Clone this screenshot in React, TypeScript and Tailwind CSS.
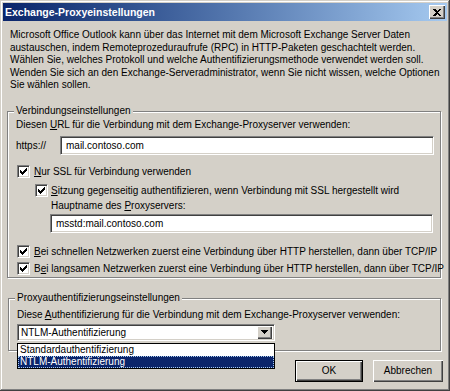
import React from "react";

const CHECK_PIXELS = [
  [6, 0],
  [5, 1], [6, 1],
  [0, 2], [4, 2], [5, 2], [6, 2],
  [0, 3], [1, 3], [3, 3], [4, 3], [5, 3],
  [0, 4], [1, 4], [2, 4], [3, 4], [4, 4],
  [1, 5], [2, 5], [3, 5],
  [2, 6],
];

function Check() {
  return (
    <span className="flex h-[13px] w-[13px] shrink-0 items-center justify-center border border-t-[#808080] border-l-[#808080] border-b-white border-r-white bg-white shadow-[inset_1px_1px_#404040,inset_-1px_-1px_#d4d0c8]">
      <svg width="7" height="7" viewBox="0 0 7 7" shapeRendering="crispEdges">
        {CHECK_PIXELS.map(([x, y]) => (
          <rect key={`${x}-${y}`} x={x} y={y} width="1" height="1" fill="#000" />
        ))}
      </svg>
    </span>
  );
}

function Sunken({ className, children }: { className?: string; children?: React.ReactNode }) {
  return (
    <div
      className={
        "flex items-center border border-t-[#808080] border-l-[#808080] border-b-white border-r-white bg-white shadow-[inset_1px_1px_#404040,inset_-1px_-1px_#d4d0c8] " +
        (className ?? "")
      }
    >
      {children}
    </div>
  );
}

function Group({ label, className, children }: { label: string; className?: string; children?: React.ReactNode }) {
  return (
    <div
      className={
        "relative border border-[#808080] shadow-[1px_1px_0_#fff,inset_1px_1px_0_#fff] " + (className ?? "")
      }
    >
      <span className="absolute left-[6px] top-[-8px] bg-[#d4d0c8] px-[2px] leading-[13px]">{label}</span>
      {children}
    </div>
  );
}

function Button({ children, def }: { children: React.ReactNode; def?: boolean }) {
  return (
    <div
      className={
        "flex h-[22px] items-center justify-center bg-[#d4d0c8] " +
        (def
          ? "w-[68px] border border-black shadow-[inset_1px_1px_#fff,inset_-1px_-1px_#404040,inset_-2px_-2px_#808080]"
          : "w-[70px] shadow-[inset_1px_1px_#fff,inset_-1px_-1px_#404040,inset_-2px_-2px_#808080]")
      }
    >
      {children}
    </div>
  );
}

export default function App() {
  return (
    <div className="h-[391px] w-[450px] overflow-hidden whitespace-nowrap bg-[#d4d0c8] font-['Liberation_Sans',Arial,sans-serif] text-[10px] leading-[13px] text-black">
      <div className="relative h-[391px] w-[450px] p-[3px] shadow-[inset_-1px_-1px_#404040,inset_1px_1px_#d4d0c8,inset_-2px_-2px_#808080,inset_2px_2px_#fff]">
        {/* Title bar */}
        <div className="flex h-[18px] items-center justify-between bg-gradient-to-r from-[#0a246a] to-[#a6caf0] pl-[2px] pr-[2px]">
          <span className="text-[10.5px] font-bold text-white">Exchange-Proxyeinstellungen</span>
          <div className="flex h-[14px] w-[16px] items-center justify-center bg-[#d4d0c8] shadow-[inset_1px_1px_#fff,inset_-1px_-1px_#404040,inset_-2px_-2px_#808080]">
            <svg width="8" height="7" viewBox="0 0 8 7" shapeRendering="crispEdges">
              <path d="M0 0h2l2 2 2-2h2L5 3.5 8 7H6L4 5 2 7H0l3-3.5z" fill="#000" />
            </svg>
          </div>
        </div>

        {/* Intro */}
        <p className="ml-[7px] mt-[8px] leading-[12.5px]">
          Microsoft Office Outlook kann über das Internet mit dem Microsoft Exchange Server Daten
          <br />
          austauschen, indem Remoteprozeduraufrufe (RPC) in HTTP-Paketen geschachtelt werden.
          <br />
          Wählen Sie, welches Protokoll und welche Authentifizierungsmethode verwendet werden soll.
          <br />
          Wenden Sie sich an den Exchange-Serveradministrator, wenn Sie nicht wissen, welche Optionen
          <br />
          Sie wählen sollen.
        </p>

        {/* Group 1 */}
        <Group label="Verbindungseinstellungen" className="ml-[4px] mt-[19px] h-[167px] w-[434px]">
          <div className="flex flex-col pl-[8px] pt-[6px]">
            <div>
              Diesen <u>U</u>RL für die Verbindung mit dem Exchange-Proxyserver verwenden:
            </div>
            <div className="mt-[5px] flex items-center">
              <span className="w-[44px]">https://</span>
              <Sunken className="h-[19px] w-[374px] pl-[5px]">mail.contoso.com</Sunken>
            </div>
            <div className="mt-[10px] flex items-center gap-[4px] pl-[1px]">
              <Check />
              <span>
                <u>N</u>ur SSL für Verbindung verwenden
              </span>
            </div>
            <div className="mt-[6px] flex items-center gap-[3px] pl-[19px]">
              <Check />
              <span>
                <u>S</u>itzung gegenseitig authentifizieren, wenn Verbindung mit SSL hergestellt wird
              </span>
            </div>
            <div className="mt-[2px] pl-[35px]">
              Hauptname des <u>P</u>roxyservers:
            </div>
            <div className="mt-[2px] pl-[34px]">
              <Sunken className="h-[19px] w-[383px] pl-[5px]">msstd:mail.contoso.com</Sunken>
            </div>
            <div className="mt-[12px] flex items-center gap-[4px] pl-[1px]">
              <Check />
              <span>
                <u>B</u>ei schnellen Netzwerken zuerst eine Verbindung über HTTP herstellen, dann über TCP/IP
              </span>
            </div>
            <div className="mt-[4px] flex items-center gap-[4px] pl-[1px]">
              <Check />
              <span>
                B<u>e</u>i langsamen Netzwerken zuerst eine Verbindung über HTTP herstellen, dann über TCP/IP
              </span>
            </div>
          </div>
        </Group>

        {/* Group 2 */}
        <Group label="Proxyauthentifizierungseinstellungen" className="ml-[5px] mt-[20px] h-[53px] w-[433px]">
          <div className="relative flex flex-col pl-[8px] pt-[9px]">
            <div>
              Diese <u>A</u>uthentifizierung für die Verbindung mit dem Exchange-Proxyserver verwenden:
            </div>
            <div className="relative mt-[3px] w-[258px]">
              <Sunken className="h-[17px] w-[258px] justify-between pl-[3px] pr-[2px]">
                <span>NTLM-Authentifizierung</span>
                <div className="flex h-[13px] w-[15px] items-center justify-center bg-[#d4d0c8] shadow-[inset_1px_1px_#fff,inset_-1px_-1px_#404040,inset_-2px_-2px_#808080]">
                  <svg width="7" height="4" viewBox="0 0 7 4" shapeRendering="crispEdges">
                    <path d="M0 0h7v1H6v1H5v1H4v1H3V3H2V2H1V1H0z" fill="#000" />
                  </svg>
                </div>
              </Sunken>
              {/* Open list overlay */}
              <div className="absolute left-0 top-[19px] z-10 w-[258px] border border-black bg-white">
                <div className="h-[12px] pl-[2px] leading-[12px]">Standardauthentifizierung</div>
                <div className="h-[12px] border border-dotted border-[#a6caf0] bg-[#0a246a] pl-[1px] leading-[10px] text-white">
                  NTLM-Authentifizierung
                </div>
              </div>
            </div>
          </div>
        </Group>

        {/* Buttons */}
        <div className="mt-[9px] flex justify-end gap-[10px] pr-[4px]">
          <Button def>OK</Button>
          <Button>Abbrechen</Button>
        </div>
      </div>
    </div>
  );
}
